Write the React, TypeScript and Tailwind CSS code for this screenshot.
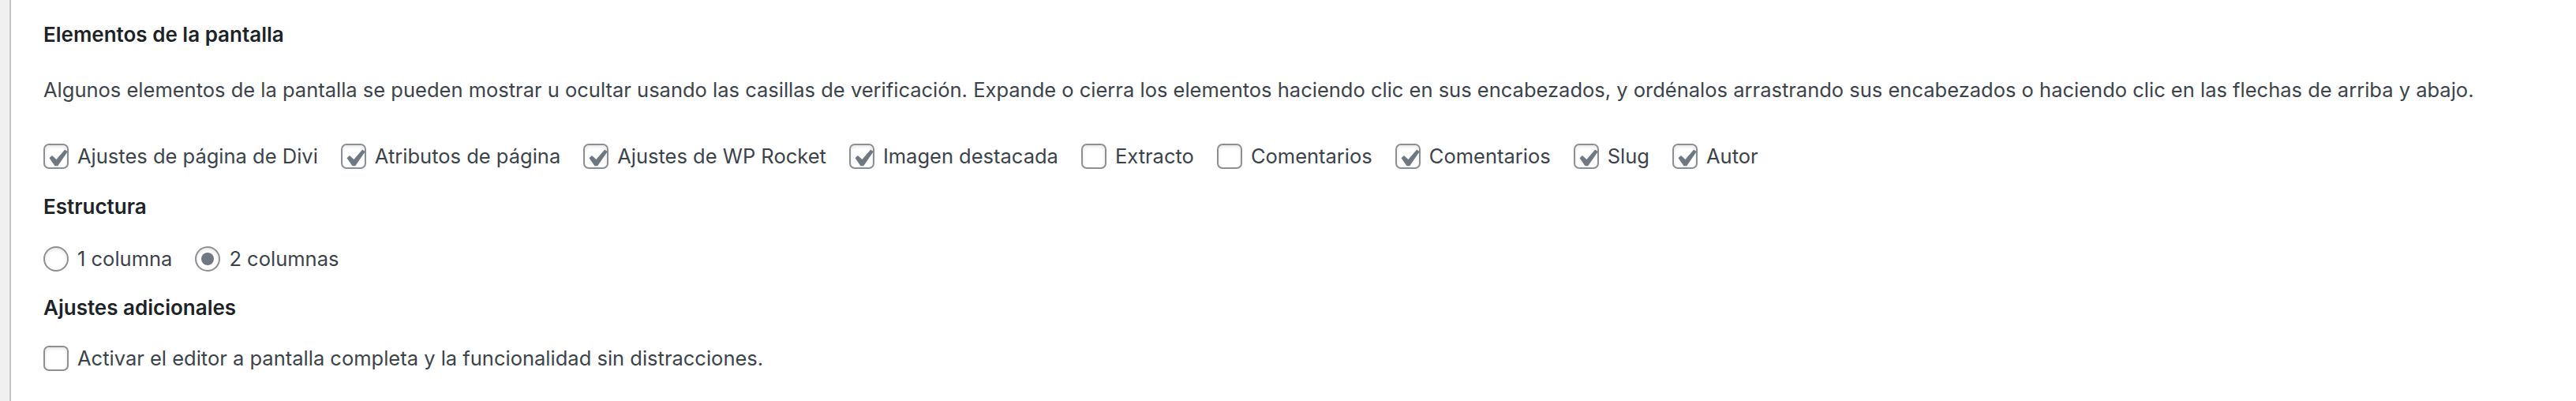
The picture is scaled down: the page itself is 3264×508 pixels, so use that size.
import React, { useState } from "react";

const font = { fontFamily: "Inter, 'Noto Sans', sans-serif" };

function CheckMark() {
  return (
    <svg
      viewBox="0 0 20 20"
      className="absolute left-[-6px] top-[-4px] w-[42px] h-[42px] pointer-events-none"
    >
      <path
        d="M14.83 4.89l1.34.94-5.81 8.38H9.02L5.78 9.67l1.34-1.25 2.57 2.4z"
        fill="#6f7882"
        stroke="#6f7882"
        strokeWidth="0.5"
        strokeLinejoin="round"
      />
    </svg>
  );
}

function Box({ label, checked, onToggle }: { label: string; checked: boolean; onToggle: () => void }) {
  return (
    <label className="flex items-center gap-[11px] cursor-pointer" onClick={onToggle}>
      <span className="relative w-[32px] h-[32px] shrink-0 rounded-[7px] border-2 border-[#8c8f94] bg-white shadow-[inset_0_2px_4px_rgba(0,0,0,0.1)]">
        {checked && <CheckMark />}
      </span>
      <span className="whitespace-nowrap">{label}</span>
    </label>
  );
}

function Radio({ label, checked, onPick }: { label: string; checked: boolean; onPick: () => void }) {
  return (
    <label className="flex items-center gap-[11px] cursor-pointer" onClick={onPick}>
      <span className="flex items-center justify-center w-[32px] h-[32px] shrink-0 rounded-full border-2 border-[#8c8f94] bg-white shadow-[inset_0_2px_4px_rgba(0,0,0,0.1)]">
        {checked && <span className="w-[16px] h-[16px] rounded-full bg-[#6f7882]" />}
      </span>
      <span className="whitespace-nowrap">{label}</span>
    </label>
  );
}

const initialBoxes = [
  { label: "Ajustes de página de Divi", checked: true },
  { label: "Atributos de página", checked: true },
  { label: "Ajustes de WP Rocket", checked: true },
  { label: "Imagen destacada", checked: true },
  { label: "Extracto", checked: false },
  { label: "Comentarios", checked: false },
  { label: "Comentarios", checked: true },
  { label: "Slug", checked: true },
  { label: "Autor", checked: true },
];

export default function App() {
  const [boxes, setBoxes] = useState(initialBoxes);
  const [cols, setCols] = useState(2);
  const [fullscreen, setFullscreen] = useState(false);

  //cambia el estado de una casilla
  const toggle = (i: number) => {
    setBoxes((prev) => prev.map((b, j) => (j === i ? { ...b, checked: !b.checked } : b)));
  };

  return (
    <div className="flex w-[3264px] h-[508px] bg-[#f0f0f1]" style={font}>
      <div className="w-[12px] shrink-0" />
      <div className="flex-1 flex flex-col bg-white border-l-2 border-[#c3c4c7] pl-[41px] pt-[28px] text-[25.5px] leading-[32px] text-[#3c434a]">
        <h5 className="font-semibold text-[26px] text-[#1d2327]">Elementos de la pantalla</h5>
        <p className="mt-[38px] whitespace-nowrap">
          Algunos elementos de la pantalla se pueden mostrar u ocultar usando las casillas de verificación. Expande o cierra los elementos haciendo clic en sus encabezados, y ordénalos arrastrando sus encabezados o haciendo clic en las flechas de arriba y abajo.
        </p>
        <div className="mt-[52px] flex items-center gap-[29px] h-[32px]">
          {boxes.map((b, i) => (
            <Box key={i} label={b.label} checked={b.checked} onToggle={() => toggle(i)} />
          ))}
        </div>
        <h5 className="mt-[32px] font-semibold text-[26px] text-[#1d2327]">Estructura</h5>
        <div className="mt-[34px] flex items-center gap-[29px] h-[32px]">
          <Radio label="1 columna" checked={cols === 1} onPick={() => setCols(1)} />
          <Radio label="2 columnas" checked={cols === 2} onPick={() => setCols(2)} />
        </div>
        <h5 className="mt-[30px] font-semibold text-[26px] text-[#1d2327]">Ajustes adicionales</h5>
        <div className="mt-[32px] flex items-center h-[32px]">
          <Box
            label="Activar el editor a pantalla completa y la funcionalidad sin distracciones."
            checked={fullscreen}
            onToggle={() => setFullscreen(!fullscreen)}
          />
        </div>
      </div>
    </div>
  );
}
